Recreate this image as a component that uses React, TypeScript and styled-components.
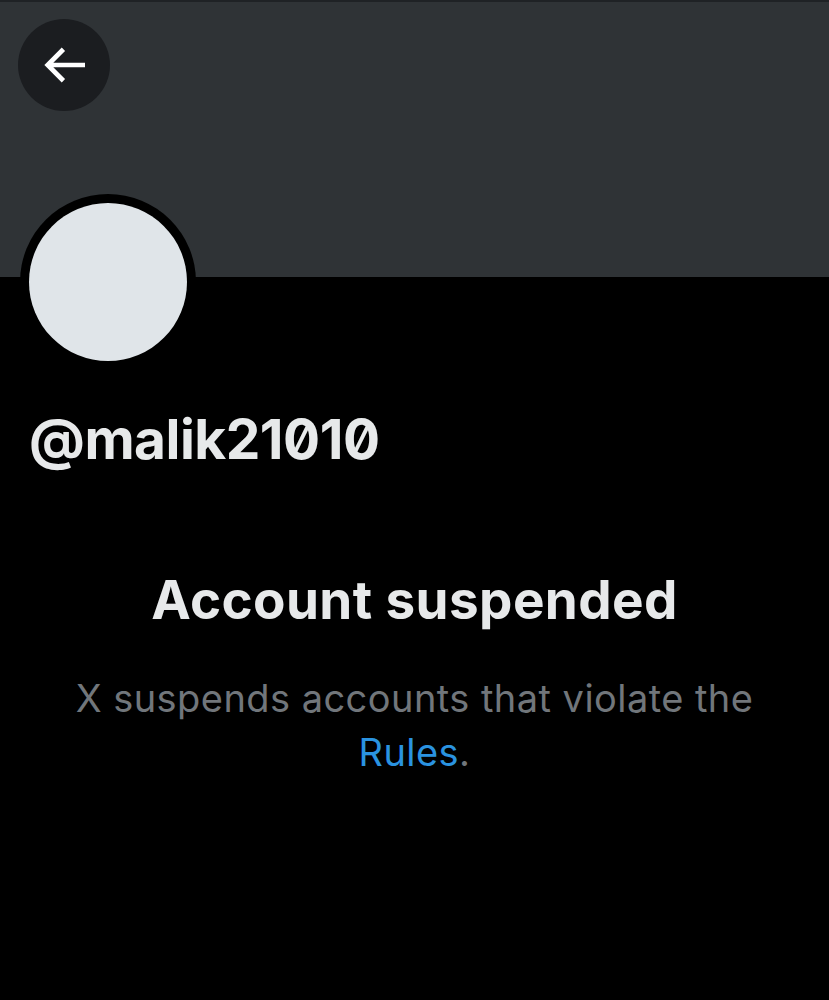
import React from 'react'
import styled, { createGlobalStyle } from 'styled-components'

const GlobalStyle = createGlobalStyle`
    html, body {
        margin: 0;
        padding: 0;
        background: #000000;
    }
    body {
        font-family: 'Inter', 'Noto Sans', sans-serif;
        -webkit-font-smoothing: antialiased;
    }
`

const BackArrow = () => (
    <svg width={56} height={56} viewBox="0 0 24 24" fill="#ffffff">
        <path d="M7.414 13l5.043 5.04-1.414 1.42L3.586 12l7.457-7.46 1.414 1.42L7.414 11H21v2H7.414z" />
    </svg>
)

export default function App() {
    return (
        <>
            <GlobalStyle />
            <Page>
                <Banner>
                    <BackButton aria-label="Back">
                        <BackArrow />
                    </BackButton>
                </Banner>
                <Profile>
                    <Avatar>
                        <AvatarFill />
                    </Avatar>
                    <Handle>@malik21010</Handle>
                </Profile>
                <Notice>
                    <Title>Account suspended</Title>
                    <Message>
                        X suspends accounts that violate the <RulesLink href="#">Rules</RulesLink>.
                    </Message>
                </Notice>
            </Page>
        </>
    )
}

const Page = styled.div`
    width: 829px;
    height: 1000px;
    background: #000000;
    display: flex;
    flex-direction: column;
    overflow: hidden;
`

const Banner = styled.div`
    height: 277px;
    box-sizing: border-box;
    background: #2f3336;
    border-top: 2px solid #1f2225;
    padding: 17px 18px;
    display: flex;
    align-items: flex-start;
`

const BackButton = styled.button`
    width: 92px;
    height: 92px;
    border-radius: 50%;
    border: 0;
    padding: 0;
    background: #1b1d20;
    display: flex;
    align-items: center;
    justify-content: center;
    cursor: pointer;
`

const Profile = styled.div`
    display: flex;
    flex-direction: column;
    align-items: flex-start;
    padding: 0 20px;
`

const Avatar = styled.div`
    width: 176px;
    height: 176px;
    margin-top: -83px;
    border-radius: 50%;
    background: #000000;
    box-sizing: border-box;
    padding: 9px;
`

const AvatarFill = styled.div`
    width: 100%;
    height: 100%;
    border-radius: 50%;
    background: #e0e5e9;
`

const Handle = styled.div`
    margin: 36px 0 0 9px;
    font-size: 55px;
    font-weight: 700;
    line-height: 66px;
    color: #e7e9ea;
    font-feature-settings: 'zero' 1;
    letter-spacing: -0.5px;
`

const Notice = styled.div`
    display: flex;
    flex-direction: column;
    align-items: center;
    text-align: center;
    padding: 0 40px;
    margin-top: 97px;
`

const Title = styled.div`
    font-size: 53px;
    font-weight: 700;
    line-height: 62px;
    color: #e7e9ea;
    letter-spacing: 0.4px;
`

const Message = styled.div`
    margin-top: 40px;
    font-size: 38px;
    font-weight: 400;
    line-height: 54px;
    color: #71767b;
    letter-spacing: 0.45px;
`

const RulesLink = styled.a`
    color: #2a93e0;
    text-decoration: none;
`
